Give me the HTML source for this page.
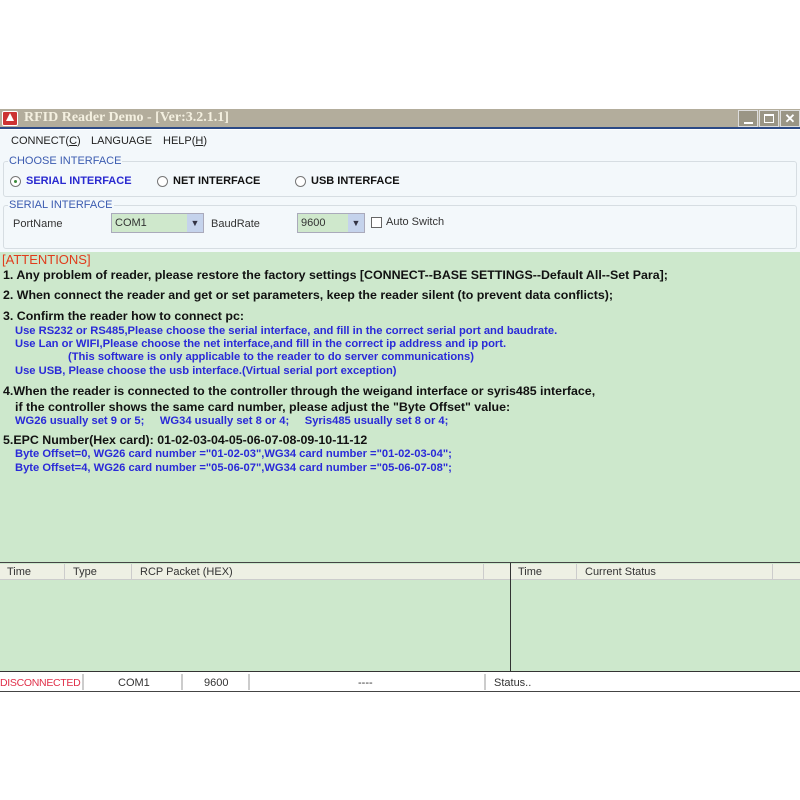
<!DOCTYPE html>
<html><head><style>
*{margin:0;padding:0;box-sizing:border-box}
body{width:800px;height:800px;background:#fff;position:relative;overflow:hidden;font-family:"Liberation Sans",Arial,sans-serif}
.a{position:absolute;white-space:nowrap}
.t{font-size:12.4px;font-weight:bold;color:#111}
.b{font-size:11.2px;font-weight:bold;color:#2a2ad8}
.s{font-size:11px;color:#333}
</style></head><body>
<!-- title bar -->
<div class="a" style="left:0;top:109px;width:800px;height:20px;background:#b3ad9c;border-bottom:2px solid #2c4a86"></div>
<div class="a" style="left:2px;top:111px;width:16px;height:15px;background:#c33;border:1px solid #fff;border-radius:2px"></div>
<div class="a" style="left:6px;top:113px;width:0;height:0;border-left:4px solid transparent;border-right:4px solid transparent;border-bottom:8px solid #fff"></div>
<div class="a" style="left:24px;top:110px;font-family:'Liberation Serif',serif;font-size:14px;font-weight:bold;color:#f4f0e0">RFID Reader Demo - [Ver:3.2.1.1]</div>
<div class="a" style="left:738px;top:110px;width:20px;height:17px;background:#9a9585;border:1px solid #ddd"><div class="a" style="left:5px;top:11px;width:9px;height:2px;background:#fff"></div></div>
<div class="a" style="left:759px;top:110px;width:20px;height:17px;background:#9a9585;border:1px solid #ddd"><div class="a" style="left:4px;top:3px;width:10px;height:9px;border:1px solid #fff;border-top:2px solid #fff"></div></div>
<div class="a" style="left:780px;top:110px;width:20px;height:17px;background:#9a9585;border:1px solid #ddd;color:#fff;font-size:13px;font-weight:bold;text-align:center;line-height:15px">✕</div>
<!-- upper area -->
<div class="a" style="left:0;top:130px;width:800px;height:122px;background:#f3f8fb"></div>
<div class="a s" style="left:11px;top:135px;color:#222">CONNECT(<u>C</u>)</div>
<div class="a s" style="left:91px;top:135px;color:#222">LANGUAGE</div>
<div class="a s" style="left:163px;top:135px;color:#222">HELP(<u>H</u>)</div>
<div class="a" style="left:3px;top:161px;width:794px;height:36px;border:1px solid #d6dde2;border-radius:3px"></div>
<div class="a s" style="left:8px;top:155px;color:#3b5bb0;background:#f3f8fb;padding:0 1px">CHOOSE INTERFACE</div>
<div class="a" style="left:10px;top:176px;width:11px;height:11px;border:1px solid #777;border-radius:50%;background:#fff"><div class="a" style="left:3px;top:3px;width:3px;height:3px;background:#3a8a3a;border-radius:50%"></div></div>
<div class="a s" style="left:26px;top:175px;font-weight:bold;color:#2a2ad0">SERIAL INTERFACE</div>
<div class="a" style="left:157px;top:176px;width:11px;height:11px;border:1px solid #777;border-radius:50%;background:#fff"></div>
<div class="a s" style="left:173px;top:175px;font-weight:bold;color:#111">NET INTERFACE</div>
<div class="a" style="left:295px;top:176px;width:11px;height:11px;border:1px solid #777;border-radius:50%;background:#fff"></div>
<div class="a s" style="left:311px;top:175px;font-weight:bold;color:#111">USB INTERFACE</div>
<div class="a" style="left:3px;top:205px;width:794px;height:44px;border:1px solid #d6dde2;border-radius:3px"></div>
<div class="a s" style="left:8px;top:199px;color:#3b5bb0;background:#f3f8fb;padding:0 1px">SERIAL INTERFACE</div>
<div class="a s" style="left:13px;top:218px">PortName</div>
<div class="a" style="left:111px;top:213px;width:93px;height:20px;background:#cfe8cc;border:1px solid #aab"></div>
<div class="a s" style="left:115px;top:217px">COM1</div>
<div class="a" style="left:187px;top:214px;width:16px;height:18px;background:#c5d3ec;color:#334;font-size:9px;text-align:center;line-height:18px">▼</div>
<div class="a s" style="left:211px;top:218px">BaudRate</div>
<div class="a" style="left:297px;top:213px;width:68px;height:20px;background:#cfe8cc;border:1px solid #aab"></div>
<div class="a s" style="left:301px;top:217px">9600</div>
<div class="a" style="left:348px;top:214px;width:16px;height:18px;background:#c5d3ec;color:#334;font-size:9px;text-align:center;line-height:18px">▼</div>
<div class="a" style="left:371px;top:217px;width:11px;height:11px;border:1px solid #666;background:#fff"></div>
<div class="a s" style="left:386px;top:216px">Auto Switch</div>
<!-- green area -->
<div class="a" style="left:0;top:252px;width:800px;height:310px;background:#cde8cc"></div>
<div class="a" style="left:2px;top:252px;font-size:13px;color:#e03c1c">[ATTENTIONS]</div>
<div class="a t" style="left:3px;top:268px">1. Any problem of reader, please restore the factory settings [CONNECT--BASE SETTINGS--Default All--Set Para];</div>
<div class="a t" style="left:3px;top:288px">2. When connect the reader and get or set parameters, keep the reader silent (to prevent data conflicts);</div>
<div class="a t" style="left:3px;top:309px">3. Confirm the reader how to connect pc:</div>
<div class="a b" style="left:15px;top:325px">Use RS232 or RS485,Please choose the serial interface, and fill in the correct serial port and baudrate.</div>
<div class="a b" style="left:15px;top:338px">Use Lan or WIFI,Please choose the net interface,and fill in the correct ip address and ip port.</div>
<div class="a b" style="left:68px;top:351px">(This software is only applicable to the reader to do server communications)</div>
<div class="a b" style="left:15px;top:365px">Use USB, Please choose the usb interface.(Virtual serial port exception)</div>
<div class="a t" style="left:3px;top:384px">4.When the reader is connected to the controller through the weigand interface or syris485 interface,</div>
<div class="a t" style="left:15px;top:400px">if the controller shows the same card number, please adjust the "Byte Offset" value:</div>
<div class="a b" style="left:15px;top:415px">WG26 usually set 9 or 5;&nbsp;&nbsp;&nbsp;&nbsp; WG34 usually set 8 or 4;&nbsp;&nbsp;&nbsp;&nbsp; Syris485 usually set 8 or 4;</div>
<div class="a t" style="left:3px;top:433px">5.EPC Number(Hex card): 01-02-03-04-05-06-07-08-09-10-11-12</div>
<div class="a b" style="left:15px;top:448px">Byte Offset=0, WG26 card number ="01-02-03",WG34 card number ="01-02-03-04";</div>
<div class="a b" style="left:15px;top:462px">Byte Offset=4, WG26 card number ="05-06-07",WG34 card number ="05-06-07-08";</div>
<!-- grids -->
<div class="a" style="left:0;top:562px;width:800px;height:110px;background:#cde8cc;border-top:1px solid #444;border-bottom:1px solid #333"></div>
<div class="a" style="left:0;top:564px;width:800px;height:16px;background:#eef0e4;border-bottom:1px solid #ccc"></div>
<div class="a" style="left:510px;top:563px;width:1px;height:109px;background:#333"></div>
<div class="a s" style="left:7px;top:566px">Time</div>
<div class="a" style="left:64px;top:564px;width:1px;height:16px;background:#ccc"></div>
<div class="a s" style="left:73px;top:566px">Type</div>
<div class="a" style="left:131px;top:564px;width:1px;height:16px;background:#ccc"></div>
<div class="a s" style="left:140px;top:566px">RCP Packet (HEX)</div>
<div class="a" style="left:483px;top:564px;width:1px;height:16px;background:#ccc"></div>
<div class="a s" style="left:518px;top:566px">Time</div>
<div class="a" style="left:576px;top:564px;width:1px;height:16px;background:#ccc"></div>
<div class="a s" style="left:585px;top:566px">Current Status</div>
<div class="a" style="left:772px;top:564px;width:1px;height:16px;background:#ccc"></div>
<!-- status bar -->
<div class="a" style="left:0;top:673px;width:800px;height:19px;background:#fff;border-bottom:1px solid #444"></div>
<div class="a s" style="left:0;top:677px;color:#e0304a;font-size:10.5px;letter-spacing:-0.3px">DISCONNECTED</div>
<div class="a" style="left:82px;top:674px;width:2px;height:16px;background:#ccc"></div>
<div class="a s" style="left:118px;top:677px">COM1</div>
<div class="a" style="left:181px;top:674px;width:2px;height:16px;background:#ccc"></div>
<div class="a s" style="left:204px;top:677px">9600</div>
<div class="a" style="left:248px;top:674px;width:2px;height:16px;background:#ccc"></div>
<div class="a s" style="left:358px;top:677px">----</div>
<div class="a" style="left:484px;top:674px;width:2px;height:16px;background:#ccc"></div>
<div class="a s" style="left:494px;top:677px">Status..</div>
</body></html>
